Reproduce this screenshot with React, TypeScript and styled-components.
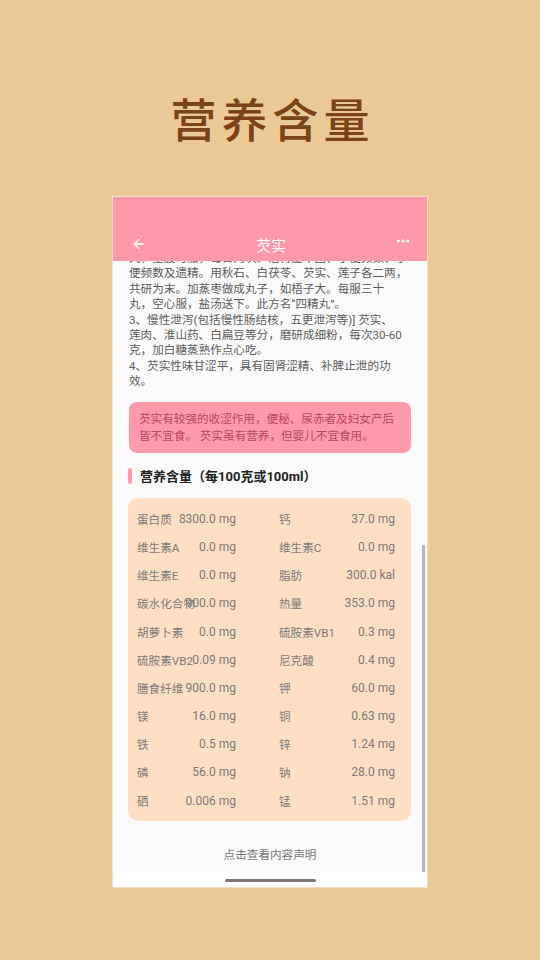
import React from 'react';
import styled, { createGlobalStyle } from 'styled-components';
import { ArrowLeft, Ellipsis } from 'lucide-react';

const GlobalStyle = createGlobalStyle`
  html, body {
    margin: 0;
    padding: 0;
    background: #ebc997;
  }
  body {
    font-family: Roboto, "Noto Sans CJK SC", sans-serif;
  }
`;

const Page = styled.div`
  width: 540px;
  height: 960px;
  display: flex;
  flex-direction: column;
  align-items: center;
  background: #ebc997;
  overflow: hidden;
`;

const Headline = styled.h1`
  margin: 94px 0 0 5px;
  height: 46px;
  line-height: 46px;
  font-size: 46px;
  font-weight: 500;
  letter-spacing: 5px;
  color: #7b4317;
  font-family: "Noto Sans CJK SC", sans-serif;
`;

const Phone = styled.div`
  position: relative;
  margin-top: 57px;
  width: 314px;
  height: 690px;
  display: flex;
  flex-direction: column;
  background: #fafafa;
  box-shadow: 0 0 0 1px #f3dfc2;
`;

const Header = styled.div`
  height: 64px;
  flex-shrink: 0;
  background: #ff98a9;
  padding-top: 30px;
  box-sizing: border-box;
  position: relative;
  z-index: 1;
`;

const ToolRow = styled.div`
  height: 34px;
  display: grid;
  grid-template-columns: 40px 1fr 40px;
  align-items: center;
  padding: 0 16px 0 18px;
  color: #fff;
`;

const HeaderTitle = styled.div`
  text-align: center;
  font-size: 15px;
  font-family: "Noto Sans CJK SC", sans-serif;
`;

const IconSlot = styled.div<{ $end?: boolean }>`
  display: flex;
  justify-content: ${p => (p.$end ? 'flex-end' : 'flex-start')};
  align-items: center;
  margin-top: ${p => (p.$end ? '-6px' : '0')};
`;

const Scroll = styled.div`
  flex: 1;
  overflow: hidden;
`;

const Inner = styled.div`
  margin-top: -10px;
  padding: 0 16px;
`;

const Body = styled.div`
  font-size: 11.6px;
  line-height: 15.4px;
  color: #5c5c5c;
`;

const Line = styled.div`
  white-space: nowrap;
`;

const Warning = styled.div`
  margin-top: 12px;
  background: #ff9aab;
  border-radius: 8px;
  padding: 9px 10px 8px;
  font-size: 11.6px;
  line-height: 17px;
  color: #b9465f;
`;

const SectionTitle = styled.div`
  margin-top: 14px;
  display: flex;
  align-items: center;
  gap: 8px;
  height: 18px;
  font-size: 13px;
  font-weight: 700;
  color: #222;
  margin-left: -1px;
`;

const Bar = styled.span`
  width: 4px;
  height: 16px;
  border-radius: 2px;
  background: #ff98a9;
`;

const Card = styled.div`
  margin-top: 13px;
  margin-left: -1px;
  background: #ffdfc3;
  border-radius: 10px;
  padding: 7px 0 6px 9px;
  display: grid;
  grid-template-columns: 99px 116px;
  column-gap: 43px;
`;

const Cell = styled.div`
  height: 28.2px;
  display: grid;
  grid-template-areas: 'c';
  align-items: center;
  color: #7a7a7a;
`;

const Label = styled.span`
  grid-area: c;
  justify-self: start;
  white-space: nowrap;
  font-size: 11.6px;
`;

const Value = styled.span`
  grid-area: c;
  justify-self: end;
  white-space: nowrap;
  font-size: 12px;
`;

const Footer = styled.div`
  margin-top: 25px;
  text-align: center;
  font-size: 11.6px;
  color: #777;
`;

const BottomBar = styled.div`
  height: 14px;
  flex-shrink: 0;
  background: #fff;
  display: flex;
  justify-content: center;
  align-items: center;
`;

const HomeLine = styled.span`
  width: 91px;
  height: 3px;
  border-radius: 2px;
  background: #777;
`;

const Thumb = styled.div`
  position: absolute;
  right: 2px;
  top: 348px;
  width: 3px;
  height: 327px;
  background: #b3b6bb;
`;

const bodyLines = [
  '丸，空腹时服，每日两次。治肾虚不固、小便频数、小',
  '便频数及遗精。用秋石、白茯苓、芡实、莲子各二两，',
  '共研为末。加蒸枣做成丸子，如梧子大。每服三十',
  '丸，空心服，盐汤送下。此方名“四精丸”。',
  '3、慢性泄泻(包括慢性肠结核，五更泄泻等)] 芡实、',
  '莲肉、淮山药、白扁豆等分，磨研成细粉，每次30-60',
  '克，加白糖蒸熟作点心吃。',
  '4、芡实性味甘涩平，具有固肾涩精、补脾止泄的功',
  '效。',
];

const nutrients: [string, string][] = [
  ['蛋白质', '8300.0 mg'],
  ['钙', '37.0 mg'],
  ['维生素A', '0.0 mg'],
  ['维生素C', '0.0 mg'],
  ['维生素E', '0.0 mg'],
  ['脂肪', '300.0 kal'],
  ['碳水化合物', '900.0 mg'],
  ['热量', '353.0 mg'],
  ['胡萝卜素', '0.0 mg'],
  ['硫胺素VB1', '0.3 mg'],
  ['硫胺素VB2', '0.09 mg'],
  ['尼克酸', '0.4 mg'],
  ['膳食纤维', '900.0 mg'],
  ['钾', '60.0 mg'],
  ['镁', '16.0 mg'],
  ['铜', '0.63 mg'],
  ['铁', '0.5 mg'],
  ['锌', '1.24 mg'],
  ['磷', '56.0 mg'],
  ['钠', '28.0 mg'],
  ['硒', '0.006 mg'],
  ['锰', '1.51 mg'],
];

export default function App() {
  return (
    <Page>
      <GlobalStyle />
      <Headline>营养含量</Headline>
      <Phone>
        <Header>
          <ToolRow>
            <IconSlot>
              <ArrowLeft size={16} strokeWidth={2} />
            </IconSlot>
            <HeaderTitle>芡实</HeaderTitle>
            <IconSlot $end>
              <Ellipsis size={16} strokeWidth={2.5} />
            </IconSlot>
          </ToolRow>
        </Header>
        <Scroll>
          <Inner>
            <Body>
              {bodyLines.map((line, i) => (
                <Line key={i}>{line}</Line>
              ))}
            </Body>
            <Warning>
              芡实有较强的收涩作用，便秘、尿赤者及妇女产后皆不宜食。 芡实虽有营养，但婴儿不宜食用。
            </Warning>
            <SectionTitle>
              <Bar />
              营养含量（每100克或100ml）
            </SectionTitle>
            <Card>
              {nutrients.map(([name, amount]) => (
                <Cell key={name}>
                  <Label>{name}</Label>
                  <Value>{amount}</Value>
                </Cell>
              ))}
            </Card>
            <Footer>点击查看内容声明</Footer>
          </Inner>
        </Scroll>
        <BottomBar>
          <HomeLine />
        </BottomBar>
        <Thumb />
      </Phone>
    </Page>
  );
}
